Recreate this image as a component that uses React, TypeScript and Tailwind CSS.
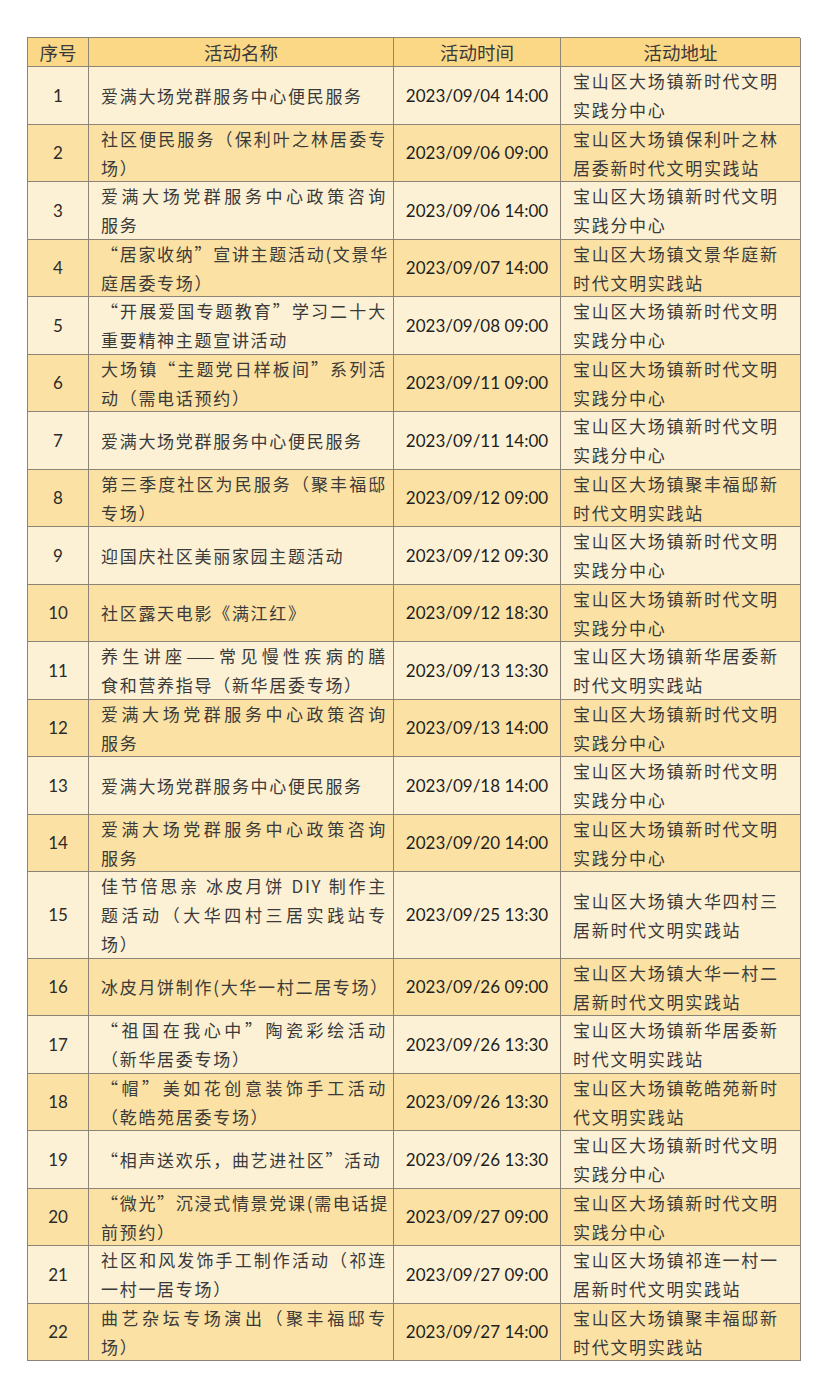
const rows: { no: string; name: string[]; time: string; addr: string[] }[] = [
  { no: "1", name: ["爱满大场党群服务中心便民服务"], time: "2023/09/04 14:00", addr: ["宝山区大场镇新时代文明", "实践分中心"] },
  { no: "2", name: ["社区便民服务（保利叶之林居委专", "场）"], time: "2023/09/06 09:00", addr: ["宝山区大场镇保利叶之林", "居委新时代文明实践站"] },
  { no: "3", name: ["爱满大场党群服务中心政策咨询", "服务"], time: "2023/09/06 14:00", addr: ["宝山区大场镇新时代文明", "实践分中心"] },
  { no: "4", name: ["“居家收纳”宣讲主题活动(文景华", "庭居委专场）"], time: "2023/09/07 14:00", addr: ["宝山区大场镇文景华庭新", "时代文明实践站"] },
  { no: "5", name: ["“开展爱国专题教育”学习二十大", "重要精神主题宣讲活动"], time: "2023/09/08 09:00", addr: ["宝山区大场镇新时代文明", "实践分中心"] },
  { no: "6", name: ["大场镇“主题党日样板间”系列活", "动（需电话预约）"], time: "2023/09/11 09:00", addr: ["宝山区大场镇新时代文明", "实践分中心"] },
  { no: "7", name: ["爱满大场党群服务中心便民服务"], time: "2023/09/11 14:00", addr: ["宝山区大场镇新时代文明", "实践分中心"] },
  { no: "8", name: ["第三季度社区为民服务（聚丰福邸", "专场）"], time: "2023/09/12 09:00", addr: ["宝山区大场镇聚丰福邸新", "时代文明实践站"] },
  { no: "9", name: ["迎国庆社区美丽家园主题活动"], time: "2023/09/12 09:30", addr: ["宝山区大场镇新时代文明", "实践分中心"] },
  { no: "10", name: ["社区露天电影《满江红》"], time: "2023/09/12 18:30", addr: ["宝山区大场镇新时代文明", "实践分中心"] },
  { no: "11", name: ["养生讲座——常见慢性疾病的膳", "食和营养指导（新华居委专场）"], time: "2023/09/13 13:30", addr: ["宝山区大场镇新华居委新", "时代文明实践站"] },
  { no: "12", name: ["爱满大场党群服务中心政策咨询", "服务"], time: "2023/09/13 14:00", addr: ["宝山区大场镇新时代文明", "实践分中心"] },
  { no: "13", name: ["爱满大场党群服务中心便民服务"], time: "2023/09/18 14:00", addr: ["宝山区大场镇新时代文明", "实践分中心"] },
  { no: "14", name: ["爱满大场党群服务中心政策咨询", "服务"], time: "2023/09/20 14:00", addr: ["宝山区大场镇新时代文明", "实践分中心"] },
  { no: "15", name: ["佳节倍思亲 冰皮月饼 DIY 制作主", "题活动（大华四村三居实践站专", "场）"], time: "2023/09/25 13:30", addr: ["宝山区大场镇大华四村三", "居新时代文明实践站"] },
  { no: "16", name: ["冰皮月饼制作(大华一村二居专场）"], time: "2023/09/26 09:00", addr: ["宝山区大场镇大华一村二", "居新时代文明实践站"] },
  { no: "17", name: ["“祖国在我心中”陶瓷彩绘活动", "（新华居委专场）"], time: "2023/09/26 13:30", addr: ["宝山区大场镇新华居委新", "时代文明实践站"] },
  { no: "18", name: ["“帽”美如花创意装饰手工活动", "（乾皓苑居委专场）"], time: "2023/09/26 13:30", addr: ["宝山区大场镇乾皓苑新时", "代文明实践站"] },
  { no: "19", name: ["“相声送欢乐，曲艺进社区”活动"], time: "2023/09/26 13:30", addr: ["宝山区大场镇新时代文明", "实践分中心"] },
  { no: "20", name: ["“微光”沉浸式情景党课(需电话提", "前预约）"], time: "2023/09/27 09:00", addr: ["宝山区大场镇新时代文明", "实践分中心"] },
  { no: "21", name: ["社区和风发饰手工制作活动（祁连", "一村一居专场）"], time: "2023/09/27 09:00", addr: ["宝山区大场镇祁连一村一", "居新时代文明实践站"] },
  { no: "22", name: ["曲艺杂坛专场演出（聚丰福邸专", "场）"], time: "2023/09/27 14:00", addr: ["宝山区大场镇聚丰福邸新", "时代文明实践站"] },
];

const cjk = "font-['Noto_Sans_CJK_SC',sans-serif]";
const latin = "font-['Lato','Noto_Sans_CJK_SC',sans-serif]";
const cell = "flex items-center overflow-hidden border-r border-b border-[#8c8577]";

export default function App() {
  return (
    <div className="min-h-[1398px] w-[835px] bg-white pl-[27px] pt-[37px]">
      <div className="grid w-[773px] grid-cols-[61px_305px_167px_240px] border-l border-t border-[#8c8577] text-[#2b2b2b]">
        {["序号", "活动名称", "活动时间", "活动地址"].map((h) => (
          <div
            key={h}
            className={`${cell} ${cjk} h-[29px] justify-center bg-[#fad886] text-[18.5px] leading-[29px] text-[#3a3a3a]`}
          >
            {h}
          </div>
        ))}

        {rows.map((r, i) => {
          const bg = i % 2 === 0 ? "bg-[#fdf1d5]" : "bg-[#fbe2a4]";
          const h = r.name.length === 3 ? "h-[86.5px]" : "h-[57.5px]";
          return (
            <div key={r.no} className="contents">
              <div className={`${cell} ${bg} ${h} ${latin} justify-center text-[17px]`}>{r.no}</div>
              <div className={`${cell} ${bg} ${h} pl-[12px] pr-[6px]`}>
                <div className={`${cjk} w-full text-[17px] leading-[29px] tracking-[1.7px] text-[#3a3a3a]`}>
                  {r.name.map((line, j) => (
                    <div
                      key={j}
                      className={
                        j < r.name.length - 1
                          ? "whitespace-nowrap text-justify [text-align-last:justify]"
                          : "whitespace-nowrap"
                      }
                    >
                      {line}
                    </div>
                  ))}
                </div>
              </div>
              <div className={`${cell} ${bg} ${h} ${latin} justify-center text-[17px] text-[#1e1e1e]`}>{r.time}</div>
              <div className={`${cell} ${bg} ${h} pl-[12px]`}>
                <div className={`${cjk} text-[17px] leading-[29px] tracking-[1.7px] text-[#3a3a3a]`}>
                  {r.addr.map((line, j) => (
                    <div key={j} className="whitespace-nowrap">
                      {line}
                    </div>
                  ))}
                </div>
              </div>
            </div>
          );
        })}
      </div>
    </div>
  );
}
